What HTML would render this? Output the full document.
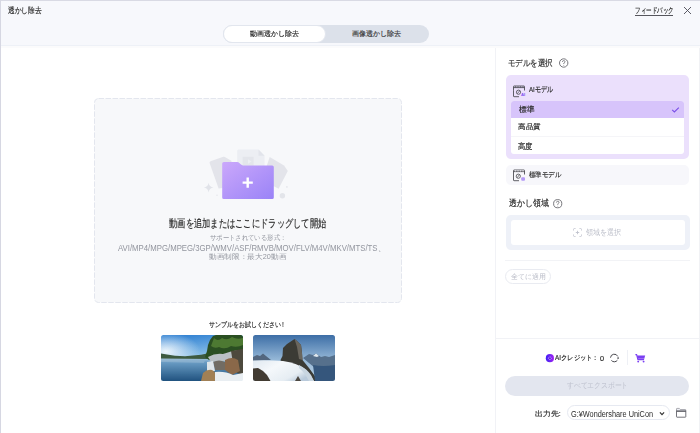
<!DOCTYPE html>
<html><head><meta charset="utf-8">
<style>
*{margin:0;padding:0;box-sizing:border-box;}
html,body{width:700px;height:433px;overflow:hidden;background:#fff;}
body{position:relative;font-family:"Liberation Sans",sans-serif;color:#222;}
.a{position:absolute;}
svg.a{overflow:visible;}
.t{position:absolute;white-space:nowrap;line-height:1;transform-origin:0 0;-webkit-text-stroke:0.18px currentColor;}
.lt{-webkit-text-stroke:0;}
</style></head><body>
<!-- header -->
<div class="a" style="left:0;top:0;width:700px;height:45px;background:#f7f8fc;"></div>
<div class="a" style="left:0;top:45px;width:700px;height:1px;background:#eef1f7;"></div>
<div class="a" style="left:0;top:46px;width:700px;height:2px;background:#fbfbfc;"></div>
<!-- borders -->
<div class="a" style="left:0;top:0;width:700px;height:1px;background:#d9dae4;"></div>
<div class="a" style="left:0;top:0;width:1px;height:433px;background:#d6d7e2;"></div>
<div class="a" style="left:699px;top:48px;width:1px;height:385px;background:#f1f2f5;"></div>

<!-- feedback underline + close -->
<div class="a" style="left:635px;top:15px;width:38px;height:1px;background:#55555c;"></div>
<svg class="a" style="left:683px;top:6px;" width="9" height="9" viewBox="0 0 9 9"><path d="M1 1L8 8M8 1L1 8" stroke="#4a4a55" stroke-width="0.9"/></svg>

<!-- tabs -->
<div class="a" style="left:223px;top:25px;width:206px;height:18px;border-radius:9px;background:#dce1ea;"></div>
<div class="a" style="left:223px;top:25px;width:103px;height:18px;border-radius:9px;background:#fff;border:1px solid #e2e6ee;"></div>

<!-- right panel divider -->
<div class="a" style="left:495px;top:48px;width:1px;height:385px;background:#f1f2f6;"></div>

<!-- model select -->
<svg class="a" style="left:559px;top:58px;" width="10" height="10" viewBox="0 0 10 10"><circle cx="4.7" cy="5" r="4.2" fill="none" stroke="#606066" stroke-width="0.85"/><path d="M3.4 3.9Q3.5 2.6 4.7 2.6Q6 2.6 6 3.7Q6 4.5 4.8 5.1V6.1" fill="none" stroke="#606066" stroke-width="0.75"/><circle cx="4.8" cy="7.4" r="0.45" fill="#606066"/></svg>

<div class="a" style="left:506px;top:75px;width:183px;height:84px;border-radius:5px;background:#ebe0fc;"></div>
<svg class="a" style="left:513px;top:84.6px;" width="13" height="13" viewBox="0 0 13 13">
 <path d="M0.5 5.2V11.2Q0.5 11.7 1 11.7H6" fill="none" stroke="#46464c" stroke-width="0.85"/>
 <path d="M0.5 5.2V1.5Q0.5 1 1 1H11Q11.5 1 11.5 1.5V5.5" fill="none" stroke="#46464c" stroke-width="0.85"/>
 <path d="M0.5 2.6H11.5" stroke="#46464c" stroke-width="0.85"/>
 <path d="M2.5 1V2.6M5 1V2.6M7.5 1V2.6M10 1V2.6" stroke="#46464c" stroke-width="0.5"/>
 <circle cx="5.5" cy="7.2" r="2.1" fill="none" stroke="#46464c" stroke-width="0.8"/>
 <path d="M4.3 8.6L6.7 5.8" stroke="#46464c" stroke-width="0.7"/>
 <text x="8.1" y="11.3" font-size="4.2" fill="#7b4ff0" font-family="Liberation Sans" font-weight="bold">AI</text>
</svg>

<div class="a" style="left:511px;top:101px;width:173px;height:53px;border-radius:3px;background:#fff;overflow:hidden;">
  <div class="a" style="left:0;top:0;width:173px;height:17px;background:#d7c4fb;"></div>
  <div class="a" style="left:0;top:35px;width:173px;height:1px;background:#f5f5f8;"></div>
</div>
<svg class="a" style="left:671px;top:106px;" width="9" height="8" viewBox="0 0 9 8"><path d="M1.2 3.8L3.4 6L7.8 1.6" fill="none" stroke="#7a4ee8" stroke-width="1.1"/></svg>

<div class="a" style="left:506px;top:165px;width:183px;height:20px;border-radius:5px;background:#f7f7fb;"></div>
<svg class="a" style="left:513px;top:169px;" width="13" height="13" viewBox="0 0 13 13">
 <path d="M0.5 1.5V11.2Q0.5 11.7 1 11.7H6" fill="none" stroke="#46464c" stroke-width="0.85"/>
 <path d="M0.5 1.5Q0.5 1 1 1H11Q11.5 1 11.5 1.5V5.5" fill="none" stroke="#46464c" stroke-width="0.85"/>
 <path d="M0.5 2.6H11.5" stroke="#46464c" stroke-width="0.85"/>
 <path d="M2.5 1V2.6M5 1V2.6M7.5 1V2.6M10 1V2.6" stroke="#f7f7fb" stroke-width="0.6"/>
 <circle cx="5.3" cy="7.2" r="2.1" fill="none" stroke="#46464c" stroke-width="0.8"/>
 <path d="M4.3 8.6L6.3 5.8" stroke="#46464c" stroke-width="0.7"/>
 <rect x="8.2" y="8.2" width="3.8" height="3.6" rx="1" fill="#b49af6"/>
</svg>

<!-- watermark region -->
<svg class="a" style="left:553px;top:199px;" width="10" height="10" viewBox="0 0 10 10"><circle cx="4.7" cy="4.7" r="4.1" fill="none" stroke="#606066" stroke-width="0.85"/><path d="M3.4 3.6Q3.5 2.3 4.7 2.3Q6 2.3 6 3.4Q6 4.2 4.8 4.8V5.8" fill="none" stroke="#606066" stroke-width="0.75"/><circle cx="4.8" cy="7.1" r="0.45" fill="#606066"/></svg>
<div class="a" style="left:506px;top:215px;width:184px;height:35px;border-radius:5px;background:#eef1f8;"></div>
<div class="a" style="left:511px;top:220px;width:174px;height:25px;border-radius:3px;background:#fff;"></div>
<svg class="a" style="left:573px;top:228px;" width="9" height="9" viewBox="0 0 9 9"><path d="M0.5 2.5V1.5Q0.5 0.5 1.5 0.5H2.5M6.5 0.5H7.5Q8.5 0.5 8.5 1.5V2.5M8.5 6.5V7.5Q8.5 8.5 7.5 8.5H6.5M2.5 8.5H1.5Q0.5 8.5 0.5 7.5V6.5M4.5 2.8V6.2M2.8 4.5H6.2" fill="none" stroke="#bfc2cd" stroke-width="0.9"/></svg>

<div class="a" style="left:505px;top:260px;width:185px;height:1px;background:#f2f3f6;"></div>
<div class="a" style="left:505px;top:269px;width:46px;height:15px;border-radius:8px;border:1px solid #e9ebf1;background:#fff;"></div>

<!-- bottom -->
<div class="a" style="left:496px;top:338px;width:203px;height:1px;background:#f1f2f6;"></div>
<svg class="a" style="left:545px;top:354px;" width="9" height="9" viewBox="0 0 9 9"><defs><linearGradient id="cg" x1="0" y1="0.5" x2="1" y2="0.5"><stop offset="0" stop-color="#3d1ff5"/><stop offset="1" stop-color="#a524f2"/></linearGradient></defs><circle cx="4.9" cy="4.2" r="4.1" fill="url(#cg)"/><path d="M4.9 2.6L6.5 4.2L4.9 5.8L3.3 4.2Z" fill="none" stroke="#d9c8ff" stroke-width="0.6"/><circle cx="4.9" cy="4.2" r="0.7" fill="#4b20d0"/></svg>
<svg class="a" style="left:606px;top:350px;" width="18" height="16" viewBox="0 0 18 16"><path d="M4.5 7.67A3.8 3.8 0 0 1 11.74 6.39" fill="none" stroke="#3e3e44" stroke-width="0.95"/><path d="M11.41 10.18A3.8 3.8 0 0 1 5.39 10.44" fill="none" stroke="#3e3e44" stroke-width="0.95"/><circle cx="12.1" cy="8" r="0.85" fill="#3e3e44"/></svg>
<div class="a" style="left:627px;top:350px;width:1px;height:15px;background:#eef0f5;"></div>
<svg class="a" style="left:635px;top:354px;" width="11" height="9" viewBox="0 0 11 9"><path d="M0.4 0.6H1.6L2.9 5.6H9.1" fill="none" stroke="#7b3ff2" stroke-width="1.1"/><path d="M1.9 1.6H10.2L9.3 4.8H2.7Z" fill="#7b3ff2"/><circle cx="3.2" cy="7.6" r="0.95" fill="#7b3ff2"/><circle cx="8.6" cy="7.6" r="0.95" fill="#7b3ff2"/></svg>

<div class="a" style="left:505px;top:376px;width:184px;height:20px;border-radius:10px;background:#e3e6ef;"></div>

<div class="a" style="left:567px;top:405px;width:103px;height:15px;border-radius:8px;border:1px solid #e6e9f1;background:#fff;"></div>
<svg class="a" style="left:659.2px;top:410.5px;" width="6" height="5" viewBox="0 0 6 5"><path d="M0.9 1.4L3 3.6L5.1 1.4" fill="none" stroke="#333" stroke-width="1.2"/></svg>
<svg class="a" style="left:675px;top:407px;" width="12" height="11" viewBox="0 0 12 11"><path d="M1.5 4V1.8Q1.5 1.4 2 1.4H4.3L5.3 2.5H10.3Q10.8 2.5 10.8 3V4" fill="#eef0f6" stroke="#8c8c94" stroke-width="0.7"/><path d="M1.5 4.2H10.8V9.7Q10.8 10.2 10.3 10.2H2Q1.5 10.2 1.5 9.7Z" fill="#fff" stroke="#5a5a62" stroke-width="0.85"/><path d="M1.2 4.1H11.1" stroke="#55555c" stroke-width="1"/></svg>

<!-- drop zone -->
<svg class="a" style="left:94px;top:98px;" width="308" height="205" viewBox="0 0 308 205"><rect x="0.5" y="0.5" width="307" height="204" rx="4" fill="#f7f8fa" stroke="#e3e6ee" stroke-width="1" stroke-dasharray="5.5 1.5"/></svg>

<!-- folder illustration (page coords) -->
<svg class="a" style="left:0;top:0;" width="700" height="433" viewBox="0 0 700 433">
  <defs><linearGradient id="fg" x1="0" y1="0" x2="1" y2="1"><stop offset="0" stop-color="#cba8fb"/><stop offset="1" stop-color="#9a83f7"/></linearGradient></defs>
  <!-- left doc -->
  <path d="M210.5 161.2L223.3 156.8Q224.5 156.4 225.3 157.2L231.3 160.8L239 186L218.6 188.5L209.6 163Q209.3 161.6 210.5 161.2Z" fill="#e3e4ea"/>
  <!-- middle doc -->
  <path d="M238.2 149.4H258.5L264.6 155.8V175H237.2V150.4Z" fill="#eceef3"/>
  <path d="M258.5 149.4V155.8H264.6" fill="#e2e4eb"/>
  <rect x="242.6" y="156.8" width="11" height="9" fill="#e3e5eb"/><path d="M248 159.2L251.5 161.5L248 163.8Z" fill="#eceef3"/>
  <!-- right doc -->
  <path d="M269.7 157L284 165.5L287.8 171L278.6 188.8L262 180Z" fill="#e3e4ea"/>
  <!-- folder -->
  <path d="M222.2 163.6Q222.2 162 223.8 162H237Q238.4 162 239.6 163.2L241 164.6Q241.8 165.4 243 165.4H272.2Q273.8 165.4 273.8 167V197.4Q273.8 199 272.2 199H223.8Q222.2 199 222.2 197.4Z" fill="url(#fg)"/>
  <path d="M242.6 182.6H252.8M247.7 177.4V187.8" stroke="#fff" stroke-width="2.4"/>
  <!-- sparkles -->
  <path d="M208.6 182.8Q209.2 187 213.4 187.6Q209.2 188.2 208.6 192.5Q208 188.2 203.8 187.6Q208 187 208.6 182.8Z" fill="#e1e3e9"/>
  <circle cx="282.4" cy="195.8" r="2.7" fill="#e3e5ea"/>
  <circle cx="286.9" cy="186.9" r="0.9" fill="#e6e7ec"/>
  <circle cx="217" cy="195.2" r="0.8" fill="#e6e7ec"/>
</svg>

<!-- samples -->
<svg class="a" style="left:161px;top:335px;" width="82" height="46" viewBox="0 0 82 46">
  <defs>
    <filter id="bl1" x="-10%" y="-10%" width="120%" height="120%"><feGaussianBlur stdDeviation="0.6"/></filter><clipPath id="c1"><rect width="82" height="46" rx="2.5"/></clipPath>
    <linearGradient id="s1" x1="0.2" y1="0" x2="0.4" y2="1"><stop offset="0" stop-color="#2f80d2"/><stop offset="0.45" stop-color="#84bbe6"/><stop offset="0.75" stop-color="#d9e9f5"/></linearGradient>
    <radialGradient id="sun" cx="0.06" cy="0.36" r="0.42"><stop offset="0" stop-color="#f4f9fd" stop-opacity="0.95"/><stop offset="1" stop-color="#f4f9fd" stop-opacity="0"/></radialGradient>
    <linearGradient id="w1" x1="0" y1="0" x2="0" y2="1"><stop offset="0" stop-color="#b3cde0"/><stop offset="0.2" stop-color="#6a9cc4"/><stop offset="1" stop-color="#1f527f"/></linearGradient>
  </defs>
  <g clip-path="url(#c1)">
    <rect width="82" height="46" fill="url(#s1)"/>
    <g filter="url(#bl1)">
    <rect width="82" height="46" fill="url(#sun)"/>
    <rect y="22.5" width="82" height="23.5" fill="url(#w1)"/>
    <path d="M0 18.5L6 19.5L14 20.8L24 21.2L32 20.5L40 19.8L46 18.5L48 24L0 23.5Z" fill="#3d5a40"/>
    <path d="M44 22L46 16L47 10L49 5L52 1L55 0H82V22L70 20L58 24L48 25Z" fill="#2c4f22"/>
    <path d="M53 3Q57 7 61 3Q66 6 71 2Q76 5 82 3V10Q76 13 70 11Q64 15 58 12Q54 14 50 11Z" fill="#5d8b3a" opacity="0.7"/>
    <path d="M47 22Q54 18 62 19Q70 16 78 15L82 16V24L66 26L50 27Z" fill="#b9c0c4"/>
    <path d="M70 16L82 14V40L76 38L72 28Z" fill="#4e4a3c"/>
    <path d="M64 25Q71 21 77 25L79 36L71 40L64 35Z" fill="#8a6848"/>
    <path d="M52 27Q58 24 64 27L64 35L54 35Z" fill="#726c63"/>
    <path d="M46 27L52 26L54 36L46 36Z" fill="#dfe5e9"/>
    <path d="M40 46L42 38Q46 34 51 35Q55 37 55 42L54 46Z" fill="#a18055"/>
    <path d="M54 37Q64 36 72 40L82 38V46H54Z" fill="#e9eef2"/>
    <path d="M0 24Q20 25.5 44 25.5L43 28Q20 27.5 0 27Z" fill="#9cbcd3" opacity="0.5"/>
    </g>
  </g>
</svg>
<svg class="a" style="left:253px;top:335px;" width="82" height="46" viewBox="0 0 82 46">
  <defs>
    <filter id="bl2" x="-10%" y="-10%" width="120%" height="120%"><feGaussianBlur stdDeviation="0.7"/></filter><clipPath id="c2"><rect width="82" height="46" rx="2.5"/></clipPath>
    <linearGradient id="s2" x1="0" y1="0" x2="0" y2="1"><stop offset="0" stop-color="#3d6ea6"/><stop offset="0.55" stop-color="#97b9d8"/><stop offset="1" stop-color="#b9d0e3"/></linearGradient>
    <linearGradient id="f2" x1="0" y1="0" x2="1" y2="0.6"><stop offset="0" stop-color="#dfe8f0"/><stop offset="0.4" stop-color="#f5f8fb"/><stop offset="0.8" stop-color="#e6edf3"/><stop offset="1" stop-color="#b9cadb"/></linearGradient>
  </defs>
  <g clip-path="url(#c2)">
    <rect width="82" height="46" fill="url(#s2)"/>
    <g filter="url(#bl2)">
    <path d="M0 22L4 20L7 21L10 18.5L13 21L18 25L0 26Z" fill="#52667e"/>
    <path d="M50 23L56 19L60 20L63 18.5L68 22L72 21L76 22L82 20V31L62 33Z" fill="#56708c"/>
    <path d="M60 21L63 18.5L66 21L64 22Z" fill="#dfe8ef"/>
    <path d="M27.5 25L29.5 21L30 13L34 9L41.5 4L44 6L48 10L49 18L49.5 25L56 33L64 44L62 46H34Z" fill="#3b3a35"/>
    <path d="M41.5 4L44 6L48 10L49 18L49.5 25L46 24L44 12Z" fill="#6a665d"/>
    <path d="M60 30Q70 32 82 30V46H62Z" fill="#34577c"/>
    <path d="M0 25.5Q16 25 30 26Q44 28 52 34Q58 40 61 46H0Z" fill="url(#f2)"/>
    <path d="M46 30Q54 34 58 40L61 46H56Q52 38 46 33Z" fill="#c9d6e1"/>
    <path d="M0 33.5L5 33L10 36L14 40L17.5 46H0Z" fill="#433b32"/>
    <path d="M42 46L45 41L48 46Z" fill="#4d4842"/>
    </g>
  </g>
</svg>
<div class="t" style="left:7.52px;top:7.16px;font-size:8.02px;transform:scaleX(0.841);color:#2b2b2b;">透かし除去</div>
<div class="t" style="left:634.68px;top:7.35px;font-size:7.70px;transform:scaleX(0.688);color:#2b2b2b;">フィードバック</div>
<div class="t" style="left:250.27px;top:31.21px;font-size:7.08px;transform:scaleX(0.997);color:#2b2b2b;">動画透かし除去</div>
<div class="t" style="left:352.39px;top:31.21px;font-size:7.08px;transform:scaleX(1.000);color:#3a3a3a;">画像透かし除去</div>
<div class="t" style="left:508.41px;top:59.33px;font-size:8.87px;transform:scaleX(0.827);color:#2b2b2b;">モデルを選択</div>
<div class="t" style="left:528.98px;top:85.99px;font-size:8.12px;transform:scaleX(0.760);color:#2b2b2b;">AIモデル</div>
<div class="t" style="left:518.67px;top:106.45px;font-size:7.66px;transform:scaleX(0.960);color:#2b2b2b;">標準</div>
<div class="t" style="left:518.36px;top:124.44px;font-size:6.96px;transform:scaleX(1.080);color:#2b2b2b;">高品質</div>
<div class="t" style="left:518.38px;top:142.66px;font-size:7.84px;transform:scaleX(0.921);color:#2b2b2b;">高度</div>
<div class="t" style="left:528.93px;top:170.78px;font-size:7.45px;transform:scaleX(0.917);color:#2b2b2b;">標準モデル</div>
<div class="t" style="left:508.76px;top:199.42px;font-size:9.18px;transform:scaleX(0.876);color:#2b2b2b;">透かし領域</div>
<div class="t lt" style="left:586.26px;top:229.43px;font-size:7.76px;transform:scaleX(0.883);color:#b9bcc7;">領域を選択</div>
<div class="t lt" style="left:510.86px;top:272.93px;font-size:7.29px;transform:scaleX(0.990);color:#b9bcc7;">全てに適用</div>
<div class="t" style="left:555.42px;top:354.18px;font-size:6.98px;transform:scaleX(0.901);color:#2b2b2b;">AIクレジット：</div>
<div class="t" style="left:599.56px;top:355.54px;font-size:6.76px;transform:scaleX(1.081);color:#2b2b2b;">0</div>
<div class="t lt" style="left:566.86px;top:380.53px;font-size:8.42px;transform:scaleX(0.851);color:#bfc2cf;">すべてエクスポート</div>
<div class="t" style="left:534.96px;top:409.78px;font-size:7.45px;transform:scaleX(1.115);color:#2b2b2b;">出力先:</div>
<div class="t lt" style="left:571.09px;top:409.68px;font-size:8.51px;transform:scaleX(0.861);color:#2b2b2b;">G:¥Wondershare UniCon</div>
<div class="t" style="left:168.76px;top:217.66px;font-size:10.51px;transform:scaleX(0.752);color:#2b2b2b;">動画を追加またはここにドラッグして開始</div>
<div class="t lt" style="left:209.76px;top:235.46px;font-size:6.60px;transform:scaleX(0.908);color:#92959e;">サポートされている形式：</div>
<div class="t lt" style="left:118.00px;top:243.57px;font-size:9.06px;transform:scaleX(0.860);color:#92959e;">AVI/MP4/MPG/MPEG/3GP/WMV/ASF/RMVB/MOV/FLV/M4V/MKV/MTS/TS、</div>
<div class="t lt" style="left:209.00px;top:254.48px;font-size:6.67px;transform:scaleX(1.098);color:#92959e;">動画制限：最大20動画</div>
<div class="t" style="left:208.51px;top:322.09px;font-size:6.80px;transform:scaleX(0.851);color:#2b2b2b;">サンプルをお試しください！</div>
</body></html>
